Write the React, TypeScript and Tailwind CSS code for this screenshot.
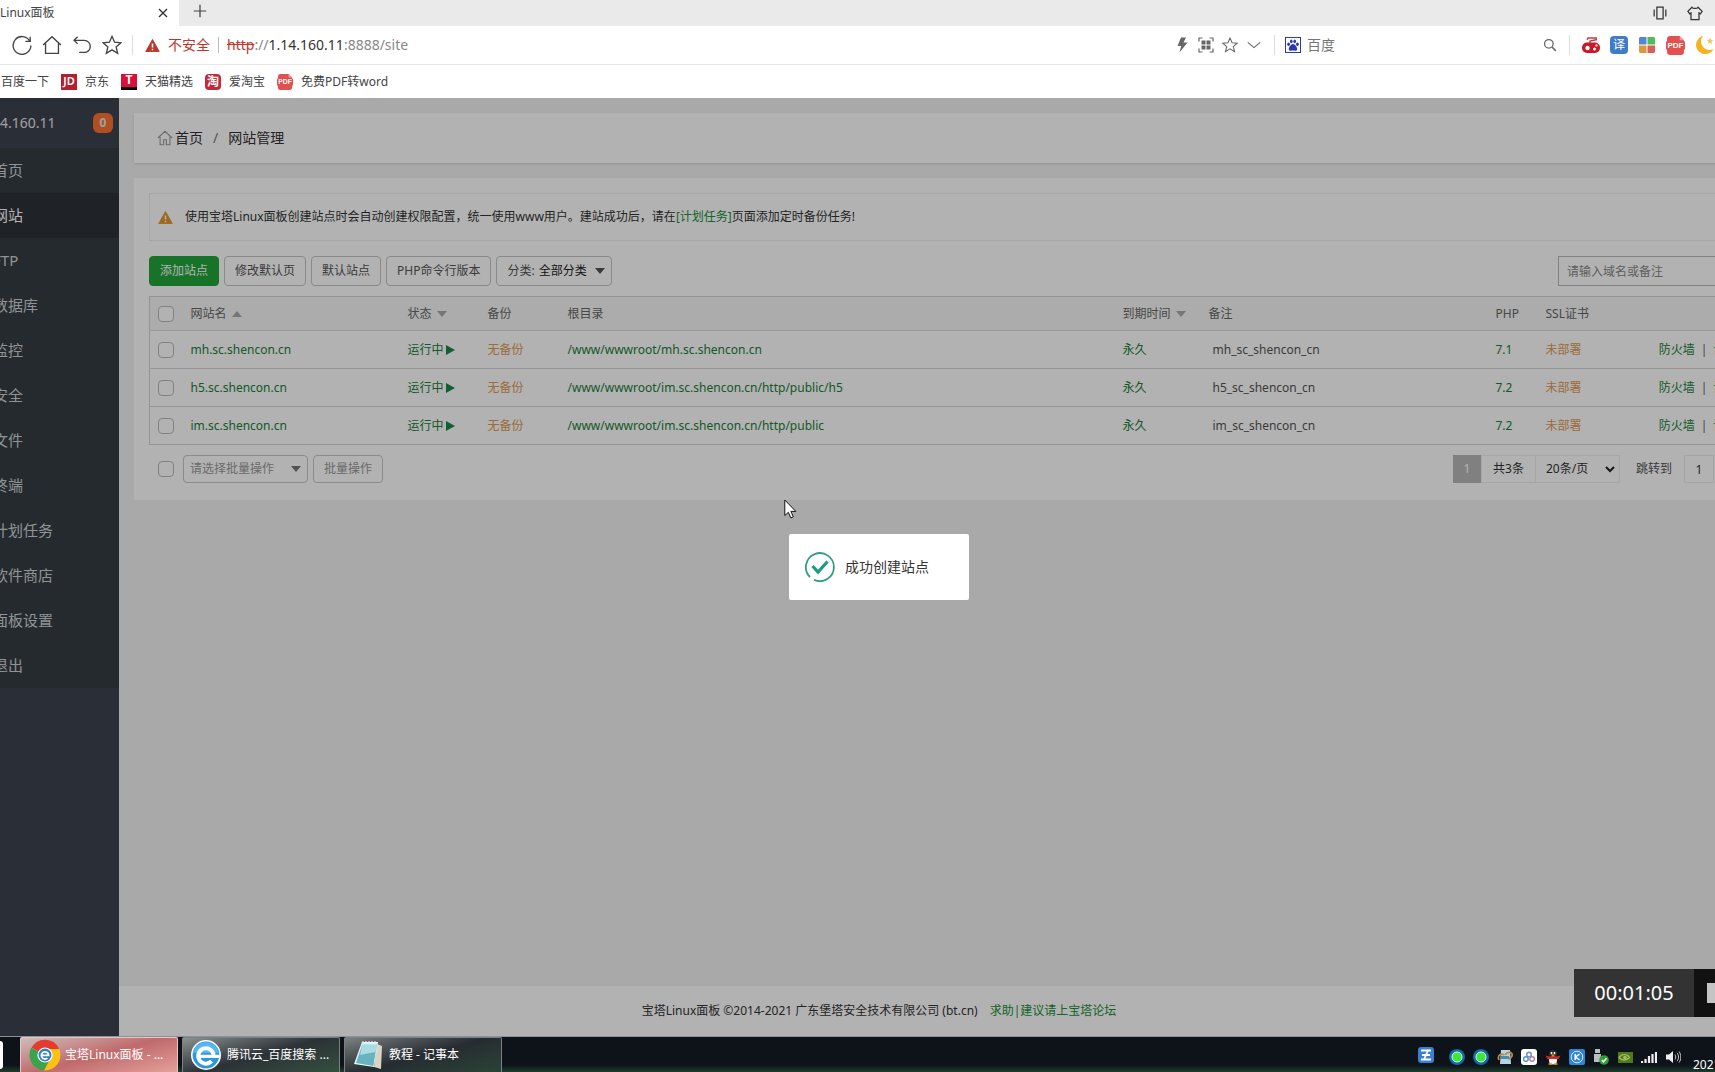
import { useState, type ReactNode } from "react";
import clsx from "clsx";

const menu = [
  "首页",
  "网站",
  "FTP",
  "数据库",
  "监控",
  "安全",
  "文件",
  "终端",
  "计划任务",
  "软件商店",
  "面板设置",
  "退出",
];

const sites = [
  { name: "mh.sc.shencon.cn", path: "/www/wwwroot/mh.sc.shencon.cn", ps: "mh_sc_shencon_cn", php: "7.1" },
  { name: "h5.sc.shencon.cn", path: "/www/wwwroot/im.sc.shencon.cn/http/public/h5", ps: "h5_sc_shencon_cn", php: "7.2" },
  { name: "im.sc.shencon.cn", path: "/www/wwwroot/im.sc.shencon.cn/http/public", ps: "im_sc_shencon_cn", php: "7.2" },
];

/* ---------- small drawings ---------- */

function Line({ size = 18, children, className }: { size?: number; children: ReactNode; className?: string }) {
  return (
    <svg
      width={size}
      height={size}
      viewBox="0 0 18 18"
      fill="none"
      stroke="currentColor"
      strokeWidth="1.2"
      className={clsx("shrink-0", className)}
      aria-hidden="true"
    >
      {children}
    </svg>
  );
}

function Warning({ color, size = 16 }: { color: string; size?: number }) {
  return (
    <svg width={size} height={size} viewBox="0 0 16 16" className="shrink-0" aria-hidden="true">
      <path d="M8 1.6 15.2 14.4H.8Z" fill={color} stroke={color} strokeLinejoin="round" />
      <path d="M8 5.8v4.4M8 11.4v1.6" stroke="#fff" strokeWidth="1.6" />
    </svg>
  );
}

function Caret({ up, className }: { up?: boolean; className?: string }) {
  return (
    <svg width="10" height="6" viewBox="0 0 10 6" className={clsx("inline-block shrink-0", className)} aria-hidden="true">
      <path d={up ? "M5 0 10 6H0Z" : "M0 0h10L5 6Z"} fill="currentColor" />
    </svg>
  );
}

function PdfIcon({ size = 16 }: { size?: number }) {
  return (
    <svg width={size} height={size} viewBox="0 0 18 18" className="shrink-0" aria-hidden="true">
      <path d="M4 0h9l4 4v11a3 3 0 0 1-3 3H4a3 3 0 0 1-3-3V3a3 3 0 0 1 3-3Z" fill="#e2504f" />
      <path d="M13 0v4h4Z" fill="#f3a09d" />
      <rect y="5" width="18" height="8" rx="1" fill="#e2504f" />
      <text x="9" y="11.8" fontSize="7.6" fontWeight="700" fill="#fff" textAnchor="middle" fontFamily="Liberation Sans, sans-serif">
        PDF
      </text>
    </svg>
  );
}

function Star({ size = 20 }: { size?: number }) {
  return (
    <Line size={size}>
      <path d="m9 1.2 2.3 5.3 5.8.5-4.4 3.8 1.4 5.7L9 13.4l-5.1 3.1 1.4-5.7L.9 7l5.8-.5Z" />
    </Line>
  );
}

function Chrome() {
  return (
    <svg width="32" height="32" viewBox="0 0 32 32" className="shrink-0" aria-hidden="true">
      <path d="M16 16 2.6 8.6A15.4 15.4 0 0 1 30 9.5Z" fill="#e33b2e" />
      <path d="M16 16 2.2 8.8A15.4 15.4 0 0 0 15 31.4l4.5-9Z" fill="#3ba34a" />
      <path d="M16 10h14.2A15.4 15.4 0 0 1 15 31.4l6-11Z" fill="#fbc116" />
      <circle cx="16" cy="16" r="7.6" fill="#fff" />
      <circle cx="16" cy="16" r="6.4" fill="#2f7fc4" />
      <path d="M12.4 16.4h7.2a3.6 3.6 0 1 0-1.2 2.7" fill="none" stroke="#fff" strokeWidth="1.8" />
    </svg>
  );
}

function EdgeBlue() {
  return (
    <svg width="30" height="32" viewBox="0 0 30 32" className="shrink-0" aria-hidden="true">
      <circle cx="15" cy="16" r="14.2" fill="#2b97e0" stroke="#fff" strokeWidth="1.6" />
      <path d="M2 14a13.2 13.2 0 0 1 26 0Z" fill="#53b8f2" />
      <path d="M7.5 17.4h21" stroke="#fff" strokeWidth="3.4" />
      <path d="M22.6 16a7.7 7.7 0 1 0-2 6.2" fill="none" stroke="#fff" strokeWidth="4" />
    </svg>
  );
}

function Notepad() {
  return (
    <svg width="30" height="30" viewBox="0 0 30 30" className="shrink-0" aria-hidden="true">
      <path d="M24 4l5 2-1 23-7-2Z" fill="#d9d4c4" />
      <path d="M9 2h16l-4 25L1 24Z" fill="#eaf6f8" />
      <path d="M9.5 4H24l-3.6 22L3 23Z" fill="#69b3c0" />
      <path d="M9.5 4H24l-1.4 8L7 15Z" fill="#a8dbe2" />
      <path d="M10 1v4M13 1v4M16 1v4M19 1v4M22 1v4" stroke="#dfe7e9" strokeWidth="1.2" />
    </svg>
  );
}

/* ---------- browser frame ---------- */

function TabBar() {
  return (
    <div className="flex h-[26px] shrink-0 items-stretch bg-[#eaeaea] text-xs text-[#444]">
      <div className="flex w-[179px] items-center justify-between bg-white pr-2.5">
        <span className="whitespace-nowrap">Linux面板</span>
        <button aria-label="关闭标签页" className="flex size-3 items-center justify-center text-[#333]">
          <Line size={12}>
            <path d="m3 3 12 12M15 3 3 15" strokeWidth="2" />
          </Line>
        </button>
      </div>
      <button aria-label="新建标签页" className="ml-3.5 flex items-center pb-1 text-[#444]">
        <Line size={14}>
          <path d="M9 1v16M1 9h16" strokeWidth="1.6" />
        </Line>
      </button>
      <div className="ml-auto flex items-center gap-5 pr-3 text-[#333]">
        <button aria-label="手机模式" className="flex">
          <Line size={14}>
            <path d="M5 1.500h8v15H5ZM1.500 4.500v9M16.500 4.500v9" strokeWidth="1.600" />
          </Line>
        </button>
        <button aria-label="皮肤" className="flex">
          <Line size={16}>
            <path d="M5.500 2.500c1 1.800 6 1.800 7 0l4.500 4.500-2 3-1.500-1V16.500h-9V9L3 10 1 7Z" strokeWidth="1.400" />
          </Line>
        </button>
      </div>
    </div>
  );
}

function AddressBar() {
  return (
    <div className="flex h-[39px] shrink-0 items-center border-b border-[#e8e8e8] bg-white pl-3 text-[#444]">
      <div className="flex items-center gap-2.5">
        <button aria-label="刷新" className="flex">
          <Line size={20}>
            <path d="M16 5.500A8 8 0 1 0 17 9.500M16.400 1.500v4.300h-4.300" />
          </Line>
        </button>
        <button aria-label="主页" className="flex">
          <Line size={20}>
            <path d="M1 9 9 1.500 17 9M3.200 7.500V16.500h11.600V7.500" />
          </Line>
        </button>
        <button aria-label="恢复" className="flex">
          <Line size={20}>
            <path d="M5 1.500 1.800 4.800 5 8M2 4.800h9a5.400 5.400 0 0 1 0 10.900H6.500" />
          </Line>
        </button>
        <button aria-label="收藏" className="flex">
          <Star />
        </button>
      </div>
      <i className="ml-2.5 h-5 w-px bg-[#ddd]" />
      <div className="ml-3 flex items-center gap-2 whitespace-nowrap text-sm text-[#b8382c]">
        <Warning color="#b8382c" size={15} />
        <span>不安全</span>
        <i className="h-4 w-px bg-[#bbb]" />
      </div>
      <div className="ml-2 whitespace-nowrap text-sm text-[#888]">
        <span className="text-[#c0392b] line-through">http</span>
        ://<span className="text-[#333]">1.14.160.11</span>:8888/site
      </div>

      <div className="ml-auto flex items-center gap-2 text-[#666]">
        <svg width="16" height="16" viewBox="0 0 16 16" aria-hidden="true">
          <path d="M7 .5h5L9.500 5.500h4L5.500 15.500 7.200 9H3.500Z" fill="#666" />
        </svg>
        <svg width="16" height="16" viewBox="0 0 16 16" aria-hidden="true">
          <path d="M1 4.500V1h3.500M11.500 1H15v3.500M15 11.500V15h-3.500M4.500 15H1v-3.500" fill="none" stroke="#666" strokeWidth="1.200" />
          <path d="M3.500 3.500h4v4h-4ZM8.500 3.500h4v4h-4ZM3.500 8.500h4v4h-4ZM8.500 8.500h4v4h-4Z" fill="#666" />
        </svg>
        <Star size={16} />
        <Line size={16}>
          <path d="m2 6 7 6 7-6" />
        </Line>
      </div>
      <i className="ml-3 h-5 w-px bg-[#ddd]" />
      <label className="ml-2.5 flex items-center">
        <svg width="16" height="16" viewBox="0 0 16 16" aria-label="百度">
          <rect x=".5" y=".5" width="15" height="15" fill="#fff" stroke="#2e3ba0" />
          <ellipse cx="3.600" cy="7.200" rx="1.400" ry="1.800" fill="#2b36b4" />
          <ellipse cx="6.300" cy="4.300" rx="1.300" ry="1.900" fill="#2b36b4" />
          <ellipse cx="9.700" cy="4.300" rx="1.300" ry="1.900" fill="#2b36b4" />
          <ellipse cx="12.400" cy="7.200" rx="1.400" ry="1.800" fill="#2b36b4" />
          <path d="M8 7c2 0 4.600 3.600 4.200 5.400-.5 2-2.700 1.200-4.200 1.200s-3.700.8-4.200-1.200C3.400 10.600 6 7 8 7Z" fill="#2b36b4" />
        </svg>
        <input
          aria-label="搜索"
          placeholder="百度"
          className="ml-1.5 w-59 text-sm outline-none placeholder:text-[#777]"
        />
        <Line size={14} className="text-[#666]">
          <path d="m11.500 11.500 5 5" strokeWidth="2" />
          <circle cx="7.500" cy="7.500" r="5.500" strokeWidth="1.600" />
        </Line>
      </label>
      <i className="ml-3 h-5 w-px bg-[#ddd]" />
      <div className="ml-3 flex items-center gap-2.5">
        <svg width="18" height="18" viewBox="0 0 18 18" aria-label="抢票">
          <path d="M5 3.800 6 2h9M15 3.500 8 5v3" fill="none" stroke="#c43a44" strokeWidth="1.400" />
          <rect y="6.500" width="18" height="10.500" rx="5" fill="#c8182a" />
          <circle cx="5.500" cy="12" r="2.200" fill="#fff" />
          <circle cx="12.500" cy="13" r="1.500" fill="#fff" />
          <circle cx="14.500" cy="9.500" r="1.200" fill="#f5c9cc" />
        </svg>
        <span className="flex size-[18px] items-center justify-center rounded bg-[#3f7cc8] text-xs text-white">译</span>
        <svg width="18" height="18" viewBox="0 0 18 18" aria-label="应用">
          <path d="M2 1h6.500v7.500H1V2Z" fill="#4f86dc" />
          <path d="M9.500 1H16l1 1v6.500H9.500Z" fill="#4fbf55" />
          <path d="M1 9.500h7.500V17H2l-1-1Z" fill="#e0963c" />
          <path d="M9.500 9.500H17V16l-1 1H9.500Z" fill="#d9605a" />
        </svg>
        <PdfIcon size={19} />
        <svg width="20" height="20" viewBox="0 0 20 20" aria-label="夜间模式">
          <path d="M8 1A9.200 9.200 0 1 0 18.500 14 8.500 8.500 0 0 1 8 1Z" fill="#f5b31f" />
          <path d="m15 2.500 1 2.200 2.400.3-1.800 1.600.5 2.400L15 7.800 12.900 9l.5-2.400L11.600 5l2.400-.3Z" fill="#f3c968" />
        </svg>
      </div>
    </div>
  );
}

function Bookmarks() {
  return (
    <div className="flex h-[33px] shrink-0 items-center gap-3 whitespace-nowrap bg-white pl-px text-xs text-[#444]">
      <a href="#">百度一下</a>
      <a href="#" className="flex items-center gap-2">
        <span className="flex size-4 items-center justify-center bg-[#b3202d] text-[11px] font-semibold text-white">JD</span>
        京东
      </a>
      <a href="#" className="flex items-center gap-2">
        <span className="flex size-4 items-center justify-center border-b-3 border-black bg-[#d9103a] text-xs font-bold text-white">
          T
        </span>
        天猫精选
      </a>
      <a href="#" className="flex items-center gap-2">
        <span className="flex size-4 items-center justify-center rounded-sm bg-[#c02a3a] text-xs font-bold text-white">淘</span>
        爱淘宝
      </a>
      <a href="#" className="flex items-center gap-2">
        <PdfIcon />
        免费PDF转word
      </a>
    </div>
  );
}

/* ---------- panel ---------- */

function Sidebar() {
  return (
    <aside className="w-[180px] shrink-0 bg-[#3d434f] text-[15px] text-[#e4e6e8]">
      <div className="flex h-[50px] items-center justify-between pr-1.5 pl-[61px]">
        <span className="text-sm">4.160.11</span>
        <span className="flex size-5 items-center justify-center rounded-md bg-[#fc7131] text-xs font-bold">0</span>
      </div>
      <nav className="bg-[#363d42]">
        {menu.map((item) => (
          <a
            key={item}
            href="#"
            className={clsx(
              "flex h-[45px] items-center pl-[54px]",
              item === "网站" ? "bg-[#2d3138] text-white" : "text-[#cfd3d6]"
            )}
          >
            {item}
          </a>
        ))}
      </nav>
    </aside>
  );
}

function Check({ label }: { label: string }) {
  return (
    <input
      type="checkbox"
      aria-label={label}
      className="block size-4 appearance-none rounded-sm border border-[#bbb] bg-white checked:bg-[#20a53a]"
    />
  );
}

const btn = "h-[30px] rounded-sm border border-[#c4c4c4] px-2.5 whitespace-nowrap";

function Toolbar() {
  return (
    <div className="mt-[15px] flex items-center gap-[5px] text-[#555]">
      <button className="h-[30px] rounded-sm border border-[#20a53a] bg-[#20a53a] px-2.5 text-white">添加站点</button>
      <button className={btn}>修改默认页</button>
      <button className={btn}>默认站点</button>
      <button className={btn}>PHP命令行版本</button>
      <label className="relative flex h-[30px] w-[116px] items-center rounded-sm border border-[#c4c4c4] pl-2.5">
        <span>分类:</span>
        <select className="ml-1 flex-1 appearance-none text-[#222] outline-none">
          <option>全部分类</option>
        </select>
        <Caret className="pointer-events-none absolute right-1.5 text-[#555]" />
      </label>
      <div className="ml-auto flex">
        <input
          aria-label="搜索网站"
          placeholder="请输入域名或备注"
          className="h-[30px] w-[192px] border border-[#bbb] px-2 outline-none placeholder:text-[#888]"
        />
        <button aria-label="搜索" className="w-[39px] border border-l-0 border-[#bbb]" />
      </div>
    </div>
  );
}

function SiteTable() {
  return (
    <table className="mt-2.5 w-full table-fixed border border-[#d4d4d4] text-left">
      <colgroup>
        <col className="w-[33px]" />
        <col className="w-[217px]" />
        <col className="w-[80px]" />
        <col className="w-[80px]" />
        <col />
        <col className="w-[86px]" />
        <col className="w-[287px]" />
        <col className="w-[50px]" />
        <col className="w-[80px]" />
        <col className="w-[171px]" />
      </colgroup>
      <thead>
        <tr className="h-[34px] border-b border-[#ddd] bg-[#f6f6f6] text-[#666] *:px-2 *:font-normal *:whitespace-nowrap">
          <th>
            <Check label="全选" />
          </th>
          <th>
            网站名 <Caret up className="ml-0.5 align-middle text-[#aaa]" />
          </th>
          <th>
            状态 <Caret className="ml-0.5 align-middle text-[#aaa]" />
          </th>
          <th>备份</th>
          <th>根目录</th>
          <th>
            到期时间 <Caret className="ml-0.5 align-middle text-[#aaa]" />
          </th>
          <th>备注</th>
          <th>PHP</th>
          <th>SSL证书</th>
          <th className="text-right">操作</th>
        </tr>
      </thead>
      <tbody>
        {sites.map((site) => (
          <tr
            key={site.name}
            className="h-[38px] border-b border-[#d4d4d4] text-[#20803a] *:px-2 *:whitespace-nowrap"
          >
            <td>
              <Check label={site.name} />
            </td>
            <td>
              <a href="#">{site.name}</a>
            </td>
            <td>
              <a href="#" className="flex items-center gap-0.5">
                运行中
                <svg width="9" height="10" viewBox="0 0 9 10" aria-hidden="true">
                  <path d="M0 0 9 5 0 10Z" fill="#1b8a42" />
                </svg>
              </a>
            </td>
            <td>
              <a href="#" className="text-[#e09a4e]">
                无备份
              </a>
            </td>
            <td>
              <a href="#">{site.path}</a>
            </td>
            <td>
              <a href="#">永久</a>
            </td>
            <td>
              <span className="ml-1 text-[#555]">{site.ps}</span>
            </td>
            <td>
              <a href="#">{site.php}</a>
            </td>
            <td>
              <a href="#" className="text-[#e09a4e]">
                未部署
              </a>
            </td>
            <td>
              <div className="flex justify-end gap-1.5">
                <a href="#">防火墙</a>
                <span className="text-[#666]">|</span>
                <a href="#">设置</a>
                <span className="text-[#666]">|</span>
                <a href="#">删除</a>
              </div>
            </td>
          </tr>
        ))}
      </tbody>
    </table>
  );
}

function TableFooter() {
  const [page, setPage] = useState("1");

  return (
    <div className="mt-2.5 flex items-center justify-between">
      <div className="flex items-center gap-[5px] pl-[9px] text-[#999]">
        <Check label="全选批量" />
        <label className="relative ml-1 flex h-7 w-[125px] items-center rounded-sm border border-[#c8c8c8]">
          <select aria-label="批量操作" className="h-full w-full appearance-none pl-1.5 outline-none">
            <option>请选择批量操作</option>
          </select>
          <Caret className="pointer-events-none absolute right-1.5 text-[#777]" />
        </label>
        <button className="h-7 rounded-sm border border-[#c8c8c8] px-2.5">批量操作</button>
      </div>

      <div className="flex w-[336px] items-center whitespace-nowrap text-[#333]">
        <span className="flex h-7 w-7 items-center justify-center bg-[#b8b8b8] text-white">1</span>
        <span className="flex h-7 w-[55px] items-center justify-center border border-[#f0f0f0]">共3条</span>
        <label className="relative flex h-7 w-[84px] items-center border border-l-0 border-[#f0f0f0]">
          <select aria-label="每页条数" className="h-full w-full appearance-none pl-2.5 outline-none">
            <option>20条/页</option>
          </select>
          <svg width="10" height="7" viewBox="0 0 10 7" className="pointer-events-none absolute right-1" aria-hidden="true">
            <path d="m1 1 4 4 4-4" fill="none" stroke="#222" strokeWidth="2" />
          </svg>
        </label>
        <label className="ml-4 flex items-center gap-3 text-[#555]">
          跳转到
          <input
            value={page}
            onChange={(e) => setPage(e.target.value)}
            className="h-7 w-[30px] border border-[#ececec] text-center text-[#333] outline-none"
          />
        </label>
        <span className="ml-2">页</span>
        <button className="ml-2 h-7 border border-[#ececec] px-2">确定</button>
      </div>
    </div>
  );
}

function Panel() {
  return (
    <div className="flex min-w-0 flex-1 flex-col bg-[#f2f2f2] text-xs text-[#333]">
      <div className="flex-1 px-[15px] pt-[15px]">
        <div className="flex h-[50px] items-center bg-white pl-[23px] text-sm shadow-sm">
          <Line size={16} className="text-[#999]">
            <path d="M1 9 9 1.500 17 9M3.500 8v8.500h4V11h3v5.500h4V8" />
          </Line>
          <a href="#" className="ml-0.5">
            首页
          </a>
          <span className="mx-2.5 text-[#777]">/</span>
          <span>网站管理</span>
        </div>

        <div className="mt-[15px] bg-white p-[15px] pb-[17px]">
          <div className="flex h-12 items-center gap-3 border border-[#eee] pl-2">
            <Warning color="#e0992c" size={15} />
            <p>
              使用宝塔Linux面板创建站点时会自动创建权限配置，统一使用www用户。建站成功后，请在
              <a href="#" className="text-[#20903a]">
                [计划任务]
              </a>
              页面添加定时备份任务!
            </p>
          </div>
          <Toolbar />
          <SiteTable />
          <TableFooter />
        </div>
      </div>

      <footer className="flex h-[50px] items-center justify-center gap-3 bg-white pr-[180px]">
        <span>宝塔Linux面板 ©2014-2021 广东堡塔安全技术有限公司 (bt.cn)</span>
        <a href="#" className="text-[#20903a]">
          求助|建议请上宝塔论坛
        </a>
      </footer>
    </div>
  );
}

function SuccessMessage() {
  return (
    <div className="absolute inset-0 flex items-center justify-center bg-black/30">
      <div role="alert" className="flex h-[66px] w-[180px] items-center gap-2.5 rounded-xs bg-white pl-4 text-sm text-[#333]">
        <svg width="30" height="30" viewBox="0 0 30 30" aria-hidden="true">
          <path d="M5 25A14 14 0 1 1 9 27.800" fill="none" stroke="#2f9e84" strokeWidth="1.800" />
          <path d="m7.500 14 5.500 6 9.500-10.500" fill="none" stroke="#1d9c80" strokeWidth="3.200" />
        </svg>
        成功创建站点
      </div>
    </div>
  );
}

/* ---------- taskbar ---------- */

function Tray() {
  return (
    <div className="ml-auto flex items-center gap-2 pt-1">
      <svg width="18" height="18" viewBox="0 0 18 18" className="mr-1.5 mb-1" aria-hidden="true">
        <rect x="1" y="1" width="16" height="16" rx="3" fill="#3a7fd2" />
        <path d="M4 4.500h10M5 9h8M4 13.500h10M11 4.500l-4 9" stroke="#fff" strokeWidth="1.800" />
      </svg>
      {["a", "b"].map((k) => (
        <svg key={k} width="16" height="16" viewBox="0 0 16 16" aria-hidden="true">
          <circle cx="8" cy="8" r="8" fill="#1668a8" />
          <circle cx="8" cy="8" r="5" fill="#3be83a" stroke="#d8ffe0" />
        </svg>
      ))}
      <svg width="16" height="16" viewBox="0 0 16 16" aria-hidden="true">
        <path d="M4 1h9l1 14H3Z" fill="#b8d4e4" />
        <path d="M2 11C0 6 4 4 7 6M8 6c3-4 8-3 7 1-1 2-3 3-5 2" fill="none" stroke="#b08a4a" strokeWidth="1.800" />
        <path d="M4 7h8v3H4Z" fill="#4d8ab4" />
      </svg>
      <svg width="16" height="16" viewBox="0 0 16 16" aria-hidden="true">
        <rect width="16" height="16" rx="3" fill="#fff" />
        <circle cx="8" cy="5.600" r="2.300" fill="none" stroke="#6b8ad0" strokeWidth="1.400" />
        <circle cx="4.900" cy="10" r="2.300" fill="none" stroke="#4b9ad0" strokeWidth="1.400" />
        <circle cx="11.100" cy="10" r="2.300" fill="none" stroke="#b8809a" strokeWidth="1.400" />
      </svg>
      <svg width="16" height="16" viewBox="0 0 16 16" aria-hidden="true">
        <path d="M4 5a4 4 0 0 1 8 0v2l3 4-3-1v3H4v-3l-3 1 3-4Z" fill="#2a2a2a" />
        <ellipse cx="8" cy="11.500" rx="4" ry="4" fill="#f2f2f2" />
        <circle cx="6.500" cy="4" r="1" fill="#fff" />
        <circle cx="9.500" cy="4" r="1" fill="#fff" />
        <path d="M.5 6.500 4 7.500h8l3.500-1L13.500 10h-11Z" fill="#d42a22" />
        <path d="M5.500 5.500h5L8 7.200Z" fill="#f0a020" />
        <path d="M3.500 15h3.500M9 15h3.500" stroke="#f0a020" strokeWidth="1.500" />
      </svg>
      <svg width="16" height="16" viewBox="0 0 16 16" aria-hidden="true">
        <rect width="16" height="16" rx="2" fill="#2f86d8" />
        <circle cx="8" cy="8" r="5.800" fill="none" stroke="#d6ecff" />
        <path d="M6.200 5v6M10.500 5 6.600 8l3.900 3" fill="none" stroke="#fff" strokeWidth="1.500" />
      </svg>
      <svg width="16" height="16" viewBox="0 0 16 16" aria-hidden="true">
        <path d="M2 0h5v4H2ZM1 5h7v8H1Z" fill="#b9bdc0" />
        <circle cx="11" cy="11" r="4.800" fill="#2f9e3a" />
        <path d="m8.800 11 1.700 1.800 3-3.500" fill="none" stroke="#fff" strokeWidth="1.500" />
      </svg>
      <svg width="16" height="16" viewBox="0 0 16 16" aria-hidden="true">
        <path d="M1 3h15v11H1Z" fill="#4f7a1c" />
        <path d="M2 8.500c3-4 8-4 10.500 0-3 3.500-7.500 3.500-10.500 0Z" fill="none" stroke="#a4c06a" strokeWidth="1.200" />
        <circle cx="8" cy="8.500" r="1.800" fill="#a4c06a" />
      </svg>
      <svg width="16" height="16" viewBox="0 0 16 16" aria-hidden="true">
        <path d="M1 14v-2M4.500 14v-4M8 14V7M11.500 14V5M15 14V3" stroke="#eee" strokeWidth="2.200" />
      </svg>
      <svg width="16" height="16" viewBox="0 0 16 16" aria-hidden="true">
        <path d="M1 5.500h3L8 2v12l-4-3.500H1Z" fill="#eee" />
        <path d="M10 5.500c1 1.500 1 3.500 0 5M12 3.800c2 2.500 2 6 0 8.400M14 2.500c2.400 3.200 2.400 8 0 11" fill="none" stroke="#ccc" />
      </svg>
      <span className="ml-1 w-[22px] pt-4 text-xs text-white">2021</span>
    </div>
  );
}

function Taskbar() {
  const task = "flex h-full w-[158px] items-center overflow-hidden rounded-t-xs border border-b-0 whitespace-nowrap";

  return (
    <div className="flex h-9 shrink-0 items-center overflow-hidden border-t border-[#8b9298] bg-linear-to-b from-[#0d1318] from-80% to-[#1d3d2c] text-xs text-white">
      <i className="h-7 w-[3px] rounded-r-sm bg-white" />
      <div className="ml-[17px] flex h-full gap-1">
        <button className={clsx(task, "gap-1 border-[#e8c4c4] bg-linear-165 from-[#cdbcbc] via-[#bf6a6c] to-[#e5a09c] pl-2")}>
          <Chrome />
          宝塔Linux面板 - ...
        </button>
        <button className={clsx(task, "gap-1.5 border-[#79827f] bg-linear-165 from-[#8d9292] via-[#2c3236] to-[#33503f] pl-2")}>
          <EdgeBlue />
          腾讯云_百度搜索 ...
        </button>
        <button className={clsx(task, "gap-1.5 border-[#79827f] bg-linear-165 from-[#7d8282] via-[#262c31] to-[#2a4336] pl-2")}>
          <Notepad />
          教程 - 记事本
        </button>
      </div>
      <Tray />
    </div>
  );
}

export default function App() {
  return (
    <div className="relative flex h-screen flex-col overflow-hidden font-['Noto_Sans','Noto_Sans_CJK_SC',sans-serif]">
      <TabBar />
      <AddressBar />
      <Bookmarks />

      {/* the panel is wider than the visible part of the desktop on both sides */}
      <main className="relative -mr-[104px] -ml-[61px] flex min-h-0 flex-1">
        <Sidebar />
        <Panel />
        <SuccessMessage />
      </main>

      <Taskbar />

      {/* recorder timer */}
      <div className="absolute right-0 bottom-[55px] flex h-12 items-stretch">
        <span className="flex w-[120px] items-center justify-center bg-[#333] text-xl text-white">00:01:05</span>
        <button aria-label="停止" className="flex w-[21px] items-center justify-end bg-[#111]">
          <i className="h-5 w-2 bg-[#c4c4c4]" />
        </button>
      </div>

      {/* mouse pointer */}
      <svg width="13" height="20" viewBox="0 0 13 20" className="absolute top-[499px] left-[784px]" aria-hidden="true">
        <path d="M.8 1v15.500l3.600-3.200 2.400 5.600 2.500-1.100-2.400-5.400h4.900Z" fill="#fff" stroke="#111" />
      </svg>
    </div>
  );
}
